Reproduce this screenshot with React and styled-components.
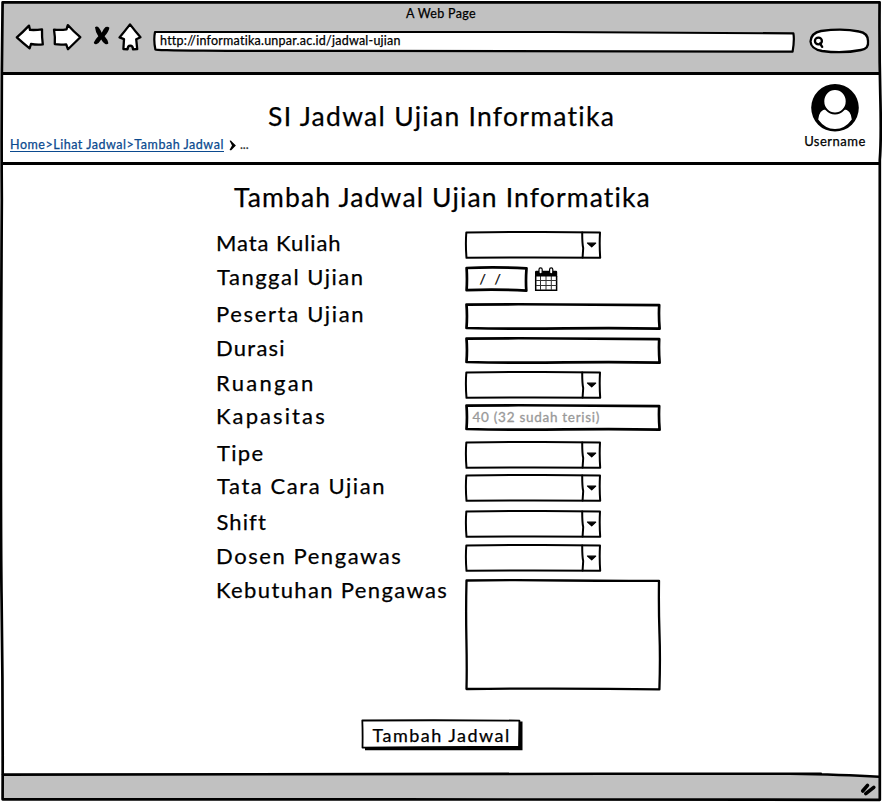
import React from "react";
import styled, { createGlobalStyle } from "styled-components";

const GlobalStyle = createGlobalStyle`
  *, *::before, *::after { box-sizing: border-box; }
  body { margin: 0; background: #fff; }
  svg { display: block; overflow: visible; }
`;

const Window = styled.div`
  position: relative;
  display: flex;
  flex-direction: column;
  width: 882px;
  height: 802px;
  padding: 3px;
  overflow: hidden;
  background: #fff;
  color: #000;
  font-family: Lato, "Liberation Sans", sans-serif;
  -webkit-text-stroke: 0.25px currentColor;
`;

const Outline = styled.svg`
  position: absolute;
  inset: 0;
  width: 100%;
  height: 100%;
  fill: none;
  stroke: #000;
  stroke-width: ${(p) => p.$weight || 2}px;
  stroke-linejoin: round;
  stroke-linecap: round;
  pointer-events: none;
`;

const Toolbar = styled.header`
  flex: none;
  height: 72px;
  background: #c1c1c1;
  border-bottom: 3px solid #000;
`;

const WindowTitle = styled.div`
  height: 20px;
  padding-top: 1px;
  font-size: 12.5px;
  line-height: 20px;
  letter-spacing: 0.32px;
  text-align: center;
`;

const NavRow = styled.nav`
  display: flex;
  align-items: flex-start;
  padding-left: 12px;
`;

const NavIcon = styled.svg`
  flex: none;
  width: ${(p) => p.$width}px;
  height: 30px;
  margin-right: ${(p) => p.$gap}px;
  fill: #fff;
  stroke: #000;
  stroke-width: 2.3px;
  stroke-linejoin: round;
  stroke-linecap: round;
`;

const AddressBar = styled.div`
  position: relative;
  width: 643px;
  height: 22px;
  margin: 7px 12px 0 0;
  padding: 1px 0 0 7px;
`;

const AddressText = styled.span`
  position: relative;
  display: block;
  font-size: 12.5px;
  line-height: 20px;
  letter-spacing: 0.24px;
`;

const SearchBox = styled.div`
  position: relative;
  width: 62px;
  height: 26px;
  margin-top: 5px;
`;

const PageHeader = styled.section`
  flex: none;
  display: flex;
  height: 90px;
  border-bottom: 3px solid #000;
`;

const Breadcrumb = styled.div`
  display: flex;
  align-items: flex-start;
  width: 265px;
  padding: 62px 0 0 7px;
  font-size: 12.5px;
  letter-spacing: 0.53px;
`;

const CrumbLink = styled.a`
  height: 15px;
  line-height: 15px;
  color: #0b4a8f;
  border-bottom: 1px solid #0b4a8f;
  white-space: nowrap;
`;

const CrumbArrow = styled.svg`
  width: 7px;
  height: 11px;
  margin: 3px 4px 0 5px;
`;

const CrumbMore = styled.span`
  line-height: 15px;
  color: #333;
  letter-spacing: 0;
`;

const SiteTitle = styled.h1`
  margin: 25px 0 0;
  font-size: 26.5px;
  font-weight: 400;
  line-height: 32px;
  letter-spacing: 1.28px;
  white-space: nowrap;
`;

const User = styled.div`
  display: flex;
  flex-direction: column;
  align-items: center;
  width: 80px;
  margin: 9px 4px 0 auto;
  font-size: 13px;
  line-height: 18px;
  letter-spacing: 0.5px;
`;

const Avatar = styled.svg`
  width: 48px;
  height: 48px;
`;

const Main = styled.main`
  flex: 1;
  display: flex;
  flex-direction: column;
  padding-top: 16px;
`;

const PageTitle = styled.h2`
  margin: 0 0 18px;
  padding-left: 231px;
  font-size: 26.5px;
  font-weight: 400;
  line-height: 32px;
  letter-spacing: 1.15px;
  white-space: nowrap;
`;

const Form = styled.form`
  display: flex;
  flex-direction: column;
  padding-left: 212px;
`;

const FormRow = styled.div`
  display: flex;
  align-items: flex-start;
  height: ${(p) => p.$height}px;
`;

const Label = styled.label`
  width: 250px;
  padding-left: ${(p) => p.$indent}px;
  margin-top: ${(p) => p.$shift}px;
  font-size: 22px;
  line-height: 22px;
  letter-spacing: ${(p) => p.$tracking}px;
  white-space: nowrap;
`;

const Field = styled.div`
  position: relative;
  width: ${(p) => p.$width}px;
  height: ${(p) => p.$height}px;
`;

const Placeholder = styled.span`
  position: relative;
  display: block;
  padding-left: 7.5px;
  color: #999;
  font-size: 13.5px;
  line-height: 26px;
  letter-spacing: 0.72px;
  white-space: nowrap;
  -webkit-text-stroke: 0.3px currentColor;
`;

const DateText = styled.span`
  display: block;
  padding-left: 14.5px;
  font-size: 14px;
  line-height: 25px;
  letter-spacing: 0.3px;
  word-spacing: 4.5px;
`;

const CalendarIcon = styled.svg`
  width: 24px;
  height: 26px;
  margin-left: 6px;
`;

const SubmitButton = styled.button`
  position: relative;
  width: 163px;
  height: 32px;
  margin: 28px 0 0 358px;
  padding: 0 0 0 11.5px;
  border: 0;
  background: transparent;
  color: #000;
  font: 18px/31px Lato, "Liberation Sans", sans-serif;
  letter-spacing: 1.48px;
  text-align: left;
  white-space: nowrap;
  -webkit-text-stroke: 0.25px currentColor;
`;

const ButtonText = styled.span`
  position: relative;
`;

const StatusBar = styled.footer`
  position: relative;
  flex: none;
  height: 27px;
`;

function SelectField() {
  return (
    <Field $width={136} $height={28}>
      <Outline $weight={2} viewBox="0 0 136 28">
        <path d="M1.3 1.5 Q50 .8 78 1 T135 1.4 Q134.3 14 135.2 26.8 Q70 26.2 1.5 26.8 Q.4 14 1.3 1.5Z" />
        <path d="M117.2 1.5 Q117.2 13 118.2 17 L117.6 26.5" />
        <path d="M122.5 12 Q127 12.4 130.7 12 L126.7 15.8Z" fill="#000" strokeWidth="1.2" />
      </Outline>
    </Field>
  );
}

function TextField({ children }) {
  return (
    <Field $width={196} $height={28}>
      <Outline $weight={2.7} viewBox="0 0 196 28">
        <path d="M1.5 1.6 Q50 1 95 1.5 T194.2 2.2 Q193.6 13 194.6 25.6 Q150 24.6 100 25.4 T1.5 25 Q2.4 13 1.5 1.6Z" />
      </Outline>
      {children}
    </Field>
  );
}

function DateField() {
  return (
    <>
      <Field $width={63} $height={26}>
        <Outline $weight={2.7} viewBox="0 0 63 26">
          <path d="M1.6 2 Q30 .8 61.5 2.3 Q60.6 14 61.3 24.6 Q30 23 1.6 24.2 Q2.3 13 1.6 2Z" />
        </Outline>
        <DateText>/ /</DateText>
      </Field>
      <CalendarIcon viewBox="0 0 24 26">
        <path d="M1.7 10V24.3H22.6V10" fill="#fff" stroke="#000" strokeWidth="1.5" />
        <path d="M6.5 10V24M12 10V24M17.3 10V24M2 14.5H22.5M2 19.5H22.5" stroke="#333" strokeWidth="1" />
        <path d="M1 10.5V6Q1 4.8 2.2 4.8H22Q23.2 4.8 23.2 6V10.5Z" />
        <rect x="5" y="1.9" width="3.2" height="6" rx="1.6" fill="#fff" stroke="#000" strokeWidth="1.2" />
        <rect x="15.6" y="1.9" width="3.2" height="6" rx="1.6" fill="#fff" stroke="#000" strokeWidth="1.2" />
      </CalendarIcon>
    </>
  );
}

function AreaField() {
  return (
    <Field $width={196} $height={112}>
      <Outline $weight={2.3} viewBox="0 0 196 112">
        <path d="M1.5 1.5 Q50 .9 100 1.5 T194 1.8 Q193.6 30 194.5 55 T194.4 110.4 Q110 109 1.5 110 Q2 90 1.4 60 T1.5 1.5Z" />
      </Outline>
    </Field>
  );
}

const rows = [
  { label: "Mata Kuliah", tracking: 0.93, height: 35, shift: 1, indent: 1, field: <SelectField /> },
  { label: "Tanggal Ujian", tracking: 1.5, height: 37, shift: 0, indent: 2, field: <DateField /> },
  { label: "Peserta Ujian", tracking: 1.67, height: 34, shift: 0, indent: 1, field: <TextField /> },
  { label: "Durasi", tracking: 1.25, height: 34, shift: 0, indent: 1, field: <TextField /> },
  { label: "Ruangan", tracking: 2.32, height: 33, shift: 1, indent: 1, field: <SelectField /> },
  {
    label: "Kapasitas", tracking: 2.1, height: 37, shift: 1, indent: 1,
    field: <TextField><Placeholder>40 (32 sudah terisi)</Placeholder></TextField>,
  },
  { label: "Tipe", tracking: 1.3, height: 33, shift: 1, indent: 2, field: <SelectField /> },
  { label: "Tata Cara Ujian", tracking: 1.57, height: 36, shift: 1, indent: 2, field: <SelectField /> },
  { label: "Shift", tracking: 1.1, height: 34, shift: 1, indent: 1.5, field: <SelectField /> },
  { label: "Dosen Pengawas", tracking: 1.56, height: 35, shift: 1, indent: 1, field: <SelectField /> },
  { label: "Kebutuhan Pengawas", tracking: 1.36, height: 112, shift: 0, indent: 1, field: <AreaField /> },
];

export default function App() {
  return (
    <Window>
      <GlobalStyle />
      <Toolbar>
        <WindowTitle>A Web Page</WindowTitle>
        <NavRow>
          <NavIcon $width={30} $gap={7} viewBox="0 0 30 30">
            <path d="M1.8 14.3Q8 9 14 2.6L15 6.9Q21 7.3 27 6.3Q26.8 14 27.8 21.4Q22 22 16 21L14.6 25.3Q8 20 1.8 14.3Z" />
          </NavIcon>
          <NavIcon $width={30} $gap={10} viewBox="0 0 30 30">
            <path d="M2 6.6Q9 7.3 14.5 6.3L15.8 2.1Q22 9 28.3 14.2L16 26.3L14.2 21.4Q8 22 2.8 21.2Q3.3 14 2 6.6Z" />
          </NavIcon>
          <NavIcon $width={19} $gap={6} viewBox="0 0 19 30">
            <path
              d="M3 4.2Q5 2.8 6.7 4.6Q8.6 7 9.7 9.8Q11.5 5.6 13.6 4Q16 3 17.4 4.8Q16.8 8.6 12.6 13.3Q16 17 16.4 20.2Q15.5 22 13.2 21Q10.6 19.4 9.2 16.6Q7 20.5 4.2 21.3Q2 21.6 1.8 19.6Q3.6 15.8 6.3 13.2Q3.4 9 3 4.2Z"
              fill="#000"
              stroke="none"
            />
          </NavIcon>
          <NavIcon $width={26} $gap={10} viewBox="0 0 26 30">
            <path d="M13 1.4Q18 8 23.5 14.2L19.2 16.2L20.2 26L16 26.3Q16 22.6 13.2 22.6Q10.6 22.6 10.6 26.3L6.4 26L7 16.1L2.5 14.4Q8 8 13 1.4Z" />
          </NavIcon>
          <AddressBar>
            <Outline $weight={2.2} viewBox="0 0 643 22">
              <path d="M2 2Q200 1.2 400 2T640.4 3.4Q641.6 10 639.6 21.6Q400 20.5 200 20.8T2.4 19.4Q.4 10 2 2Z" fill="#fff" />
            </Outline>
            <AddressText>http://informatika.unpar.ac.id/jadwal-ujian</AddressText>
          </AddressBar>
          <SearchBox>
            <Outline $weight={2.3} viewBox="0 0 62 26">
              <path d="M13 3Q35 .2 51 3.5Q60 5 60 13Q61 21 53 22Q35 25.8 14 23Q3 21 2.5 13.5Q3 5 13 3Z" fill="#fff" />
              <ellipse cx="10.4" cy="13" rx="3.5" ry="3.3" />
              <path d="M12 15.5L14.2 18.8" />
            </Outline>
          </SearchBox>
        </NavRow>
      </Toolbar>

      <PageHeader>
        <Breadcrumb>
          <CrumbLink>Home&gt;Lihat Jadwal&gt;Tambah Jadwal</CrumbLink>
          <CrumbArrow viewBox="0 0 7 11">
            <path d="M.6 .8Q1.8 0 3 1.8L6.9 5.4L3 9.4Q1.5 11 .6 9.8L3 5.6Z" />
          </CrumbArrow>
          <CrumbMore>...</CrumbMore>
        </Breadcrumb>
        <SiteTitle>SI Jadwal Ujian Informatika</SiteTitle>
        <User>
          <Avatar viewBox="0 0 48 48">
            <circle cx="24" cy="23.8" r="23.8" />
            <path d="M7.2 35.5Q8 25.6 15.5 25.2Q24 30 32.5 25.2Q40 25.6 40.8 35.5Q34 45 24 45T7.2 35.5Z" fill="#fff" />
            <ellipse cx="24" cy="17.2" rx="11.7" ry="12.3" fill="#fff" stroke="#000" strokeWidth="2" />
          </Avatar>
          Username
        </User>
      </PageHeader>

      <Main>
        <PageTitle>Tambah Jadwal Ujian Informatika</PageTitle>
        <Form>
          {rows.map((row) => (
            <FormRow key={row.label} $height={row.height}>
              <Label $tracking={row.tracking} $shift={row.shift} $indent={row.indent}>
                {row.label}
              </Label>
              {row.field}
            </FormRow>
          ))}
        </Form>
        <SubmitButton>
          <Outline $weight={1.8} viewBox="0 0 163 32">
            <path d="M4 27H158V2.5H161.5V31.2H4Z" fill="#000" stroke="none" />
            <path d="M1.3 1.5Q80 1 158.4 1.6L158 28Q80 27.6 1.5 28.6Q1.8 14 1.3 1.5Z" fill="#fff" />
          </Outline>
          <ButtonText>Tambah Jadwal</ButtonText>
        </SubmitButton>
      </Main>

      <StatusBar>
        <Outline $weight={2.6} viewBox="0 0 876 27">
          <path d="M0 2.6Q300 2 600 1.8T787 1.8Q840 2.6 876 4.8V27H0Z" fill="#c1c1c1" stroke="none" />
          <path d="M0 2.6Q300 2 600 1.8T787 1.8Q840 2.6 876 4.8" />
          <path d="M859.7 19L864.5 13.4M862.8 21.7L870.8 15.4" strokeWidth="3.6" />
        </Outline>
      </StatusBar>

      <Outline $weight={2.7} viewBox="0 0 882 802">
        <path d="M2.6 2.3Q400 1.7 879.6 2.3Q879.2 50 880.3 95T879.8 160Q879 400 879.8 799.8Q600 798.8 400 799.4T2.6 799.3Q3 700 1.6 600T1.8 200Q1.2 100 2.6 2.3Z" />
      </Outline>
    </Window>
  );
}
